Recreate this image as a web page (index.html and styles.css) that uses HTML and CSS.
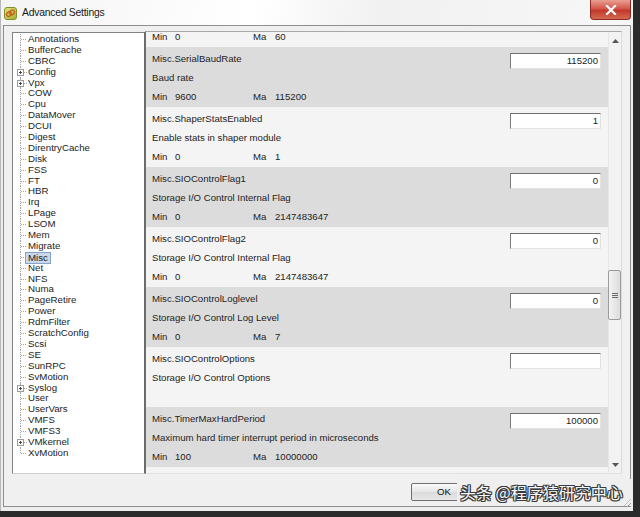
FILE: index.html
```html
<!DOCTYPE html>
<html>
<head>
<meta charset="utf-8">
<link rel="stylesheet" href="styles.css">
</head>
<body>
<div class="window">
  <div class="titlebar">
    <svg class="title-icon" width="13" height="13" viewBox="0 0 13 13">
      <defs>
        <linearGradient id="ig" x1="0" y1="0" x2="1" y2="1">
          <stop offset="0" stop-color="#e9e27a"/>
          <stop offset="1" stop-color="#9fb235"/>
        </linearGradient>
      </defs>
      <rect x="0.5" y="0.5" width="12" height="12" rx="2.5" fill="url(#ig)" stroke="#7f8f2a"/>
      <rect x="2.5" y="5" width="5" height="4" rx="1.5" fill="none" stroke="#c8621c" stroke-width="1.4" transform="rotate(-40 5 7)"/>
      <rect x="5.5" y="3.5" width="5" height="4" rx="1.5" fill="none" stroke="#c8621c" stroke-width="1.4" transform="rotate(-40 8 5.5)"/>
    </svg>
    <span class="title-text">Advanced Settings</span>
    <div class="close-btn">
      <svg width="12" height="10" viewBox="0 0 12 10"><path d="M2 1 L10 9 M10 1 L2 9" stroke="#fff" stroke-width="2.2" stroke-linecap="square"/></svg>
    </div>
  </div>

  <div class="frame">
    <div class="main">
      <div class="tree">
        <ul class="tree-list">
          <li>Annotations</li>
          <li>BufferCache</li>
          <li>CBRC</li>
          <li class="exp"><span class="box"></span>Config</li>
          <li class="exp"><span class="box"></span>Vpx</li>
          <li>COW</li>
          <li>Cpu</li>
          <li>DataMover</li>
          <li>DCUI</li>
          <li>Digest</li>
          <li>DirentryCache</li>
          <li>Disk</li>
          <li>FSS</li>
          <li>FT</li>
          <li>HBR</li>
          <li>Irq</li>
          <li>LPage</li>
          <li>LSOM</li>
          <li>Mem</li>
          <li>Migrate</li>
          <li><span class="sel">Misc</span></li>
          <li>Net</li>
          <li>NFS</li>
          <li>Numa</li>
          <li>PageRetire</li>
          <li>Power</li>
          <li>RdmFilter</li>
          <li>ScratchConfig</li>
          <li>Scsi</li>
          <li>SE</li>
          <li>SunRPC</li>
          <li>SvMotion</li>
          <li class="exp"><span class="box"></span>Syslog</li>
          <li>User</li>
          <li>UserVars</li>
          <li>VMFS</li>
          <li>VMFS3</li>
          <li class="exp"><span class="box"></span>VMkernel</li>
          <li class="last">XvMotion</li>
        </ul>
      </div>

      <div class="settings">
        <div class="rows-view">
          <div class="rows">
            <div class="row light">
              <div class="info">
                <div class="name">Misc.SerialBaudOverride</div>
                <div class="desc">Serial baud override</div>
                <div class="range"><span class="rmin"><span class="lbl">Min</span>0</span><span class="lbl2">Ma</span>60</div>
              </div>
              <div class="field">0</div>
            </div>
            <div class="row gray">
              <div class="info">
                <div class="name">Misc.SerialBaudRate</div>
                <div class="desc">Baud rate</div>
                <div class="range"><span class="rmin"><span class="lbl">Min</span>9600</span><span class="lbl2">Ma</span>115200</div>
              </div>
              <div class="field">115200</div>
            </div>
            <div class="row light">
              <div class="info">
                <div class="name">Misc.ShaperStatsEnabled</div>
                <div class="desc">Enable stats in shaper module</div>
                <div class="range"><span class="rmin"><span class="lbl">Min</span>0</span><span class="lbl2">Ma</span>1</div>
              </div>
              <div class="field">1</div>
            </div>
            <div class="row gray">
              <div class="info">
                <div class="name">Misc.SIOControlFlag1</div>
                <div class="desc">Storage I/O Control Internal Flag</div>
                <div class="range"><span class="rmin"><span class="lbl">Min</span>0</span><span class="lbl2">Ma</span>2147483647</div>
              </div>
              <div class="field">0</div>
            </div>
            <div class="row light">
              <div class="info">
                <div class="name">Misc.SIOControlFlag2</div>
                <div class="desc">Storage I/O Control Internal Flag</div>
                <div class="range"><span class="rmin"><span class="lbl">Min</span>0</span><span class="lbl2">Ma</span>2147483647</div>
              </div>
              <div class="field">0</div>
            </div>
            <div class="row gray">
              <div class="info">
                <div class="name">Misc.SIOControlLoglevel</div>
                <div class="desc">Storage I/O Control Log Level</div>
                <div class="range"><span class="rmin"><span class="lbl">Min</span>0</span><span class="lbl2">Ma</span>7</div>
              </div>
              <div class="field">0</div>
            </div>
            <div class="row light">
              <div class="info">
                <div class="name">Misc.SIOControlOptions</div>
                <div class="desc">Storage I/O Control Options</div>
                <div class="range"></div>
              </div>
              <div class="field"></div>
            </div>
            <div class="row gray">
              <div class="info">
                <div class="name">Misc.TimerMaxHardPeriod</div>
                <div class="desc">Maximum hard timer interrupt period in microseconds</div>
                <div class="range"><span class="rmin"><span class="lbl">Min</span>100</span><span class="lbl2">Ma</span>10000000</div>
              </div>
              <div class="field">100000</div>
            </div>
            <div class="row light">
              <div class="info"></div>
              <div class="field"></div>
            </div>
          </div>
        </div>
        <div class="scrollbar">
          <div class="sb-arrow"><svg width="7" height="4" viewBox="0 0 7 4"><path d="M0 4 L3.5 0 L7 4 Z" fill="#555"/></svg></div>
          <div class="sb-thumb"><span></span><span></span><span></span></div>
          <div class="sb-fill"></div>
          <div class="sb-arrow"><svg width="7" height="4" viewBox="0 0 7 4"><path d="M0 0 L3.5 4 L7 0 Z" fill="#555"/></svg></div>
        </div>
      </div>
    </div>

    <div class="buttons">
      <div class="btn">OK</div>
      <div class="btn" aria-label="Cancel"></div>
      <div class="btn" aria-label="Help"></div>
    </div>
  </div>

  <div class="watermark">头条 @程序猿研究中心</div>
  <div class="grip"></div>
</div>
</body>
</html>
```

FILE: styles.css
```css
* { box-sizing: border-box; }

body {
  margin: 0;
  width: 640px;
  height: 517px;
  overflow: hidden;
  background: #2b2b2b;
  font-family: "Liberation Sans", Arial, sans-serif;
  color: #222;
}

.window {
  position: relative;
  width: 633px;
  height: 511px;
  background: #eeeeee;
  border-left: 1px solid #b8b8b8;
}

.titlebar {
  height: 25px;
  display: flex;
  align-items: center;
  background: linear-gradient(100deg, #f4f4f4 0%, #ffffff 40%, #f1f1f1 60%, #f7f7f7 100%);
}

.title-icon {
  margin-left: 3px;
  margin-top: 2px;
}

.title-text {
  margin-left: 5px;
  font-size: 10.4px;
  letter-spacing: -0.25px;
  color: #1a1a1a;
  font-family: "Liberation Sans", Arial, sans-serif;
}

.close-btn {
  margin-left: auto;
  margin-right: 2px;
  align-self: flex-start;
  width: 41px;
  height: 20px;
  border: 1px solid #8e2a22;
  border-top: none;
  border-radius: 0 0 4px 4px;
  background: linear-gradient(#e8a093 0%, #d2574a 45%, #c2392b 55%, #d56a50 100%);
  display: flex;
  align-items: center;
  justify-content: center;
}

.frame {
  margin: 0 2px 0 2px;
  height: 482px;
  border: 1px solid #8e8e8e;
  background: #f0f0f0;
  padding: 5px 8px 0 8px;
}

.main {
  display: flex;
  height: 443px;
}

/* Tree */
.tree {
  width: 133px;
  margin-top: 1px;
  background: #fff;
  border: 1px solid #828282;
  border-right-color: #6a6a6a;
  border-bottom-color: #d0d0d0;
  overflow: hidden;
}

.tree-list {
  list-style: none;
  margin: 0;
  padding: 1px 0 0 0;
}

.tree-list li {
  position: relative;
  height: 10.9px;
  line-height: 10.9px;
  font-size: 9.7px;
  padding-left: 15px;
  white-space: nowrap;
  color: #1c1c1c;
}

.tree-list li::before {
  content: "";
  position: absolute;
  left: 7px;
  top: 0;
  bottom: 0;
  border-left: 1px dotted #a4a4a4;
}

.tree-list li.last::before {
  bottom: 50%;
}

.tree-list li::after {
  content: "";
  position: absolute;
  left: 8px;
  width: 5px;
  top: 5px;
  border-top: 1px dotted #a4a4a4;
}

.tree-list li.exp::after {
  left: 11px;
  width: 3px;
}

.box {
  position: absolute;
  left: 4px;
  top: 2px;
  width: 7px;
  height: 7px;
  border: 1px solid #9c9c9c;
  background: #fff;
  z-index: 1;
}

.box::before {
  content: "";
  position: absolute;
  left: 1px;
  top: 2px;
  width: 3px;
  height: 1px;
  background: #444;
}

.box::after {
  content: "";
  position: absolute;
  left: 2px;
  top: 1px;
  width: 1px;
  height: 3px;
  background: #444;
}

.sel {
  display: inline-block;
  margin-left: -3px;
  padding: 0 2px;
  line-height: 10px;
  background: #cad8ea;
  border: 1px solid #86a3c8;
}

/* Settings panel */
.settings {
  flex: 1;
  display: flex;
  border: 1px solid #a8a8a8;
  border-left-color: #6e6e6e;
  border-right-color: #dcdcdc;
  border-bottom-color: #e0e0e0;
  background: #f4f4f4;
}

.rows-view {
  flex: 1;
  overflow: hidden;
}

.rows {
  margin-top: -45px;
}

.row {
  height: 60px;
  display: flex;
  padding: 2px 7px 0 6px;
}

.row.gray { background: #dcdcdc; }
.row.light { background: #f4f4f4; }

.info {
  flex: 1;
  font-size: 9.6px;
  line-height: 19px;
  color: #232323;
  white-space: nowrap;
}

.range { height: 19px; }

.rmin {
  display: inline-block;
  width: 101px;
}

.lbl {
  display: inline-block;
  width: 23px;
}

.lbl2 {
  display: inline-block;
  width: 22px;
}

.field {
  width: 91px;
  height: 16px;
  margin-top: 4px;
  background: #fff;
  border: 1px solid #e2e2e2;
  border-top-color: #6f6f6f;
  border-left-color: #7c7c7c;
  font-size: 9.6px;
  line-height: 14px;
  text-align: right;
  padding-right: 2px;
  color: #222;
}

/* Scrollbar */
.scrollbar {
  width: 13px;
  display: flex;
  flex-direction: column;
  background: #f2f2f2;
  border-left: 1px solid #e6e6e6;
}

.sb-arrow {
  height: 17px;
  display: flex;
  align-items: center;
  justify-content: center;
}

.sb-thumb {
  margin-top: 221px;
  height: 50px;
  margin-left: -1px;
  border: 1px solid #9b9b9b;
  border-radius: 2px;
  background: linear-gradient(90deg, #f3f3f3, #dcdcdc);
  display: flex;
  flex-direction: column;
  align-items: center;
  justify-content: center;
  gap: 1px;
}

.sb-thumb span {
  display: block;
  width: 6px;
  height: 1px;
  background: #6a6a6a;
}

.sb-fill { flex: 1; }

/* Buttons */
.buttons {
  display: flex;
  justify-content: flex-end;
  gap: 5px;
  padding: 9px 3px 0 0;
}

.btn {
  width: 66px;
  height: 18px;
  border: 1px solid #6f6f6f;
  border-radius: 2px;
  background: linear-gradient(#fafafa, #e6e6e6 50%, #dadada 51%, #e8e8e8);
  font-size: 9.6px;
  line-height: 16px;
  text-align: center;
  color: #111;
}

.watermark {
  position: absolute;
  left: 456px;
  top: 479px;
  width: 176px;
  height: 27px;
  background: #efefef;
  font-family: "Noto Sans CJK SC", sans-serif;
  font-size: 16px;
  line-height: 27px;
  padding-left: 3px;
  color: #f7f7f7;
  white-space: nowrap;
  text-shadow:
    1px 0 0 #3a3a3a, -1px 0 0 #3a3a3a, 0 1px 0 #3a3a3a, 0 -1px 0 #3a3a3a,
    1px 1px 0 #3a3a3a, -1px -1px 0 #3a3a3a, 1px -1px 0 #3a3a3a, -1px 1px 0 #3a3a3a;
}

.grip {
  position: absolute;
  right: 2px;
  bottom: 4px;
  width: 8px;
  height: 8px;
  background: repeating-linear-gradient(135deg, transparent 0 2px, #9a9a9a 2px 3px);
  clip-path: polygon(100% 0, 100% 100%, 0 100%);
}
```
